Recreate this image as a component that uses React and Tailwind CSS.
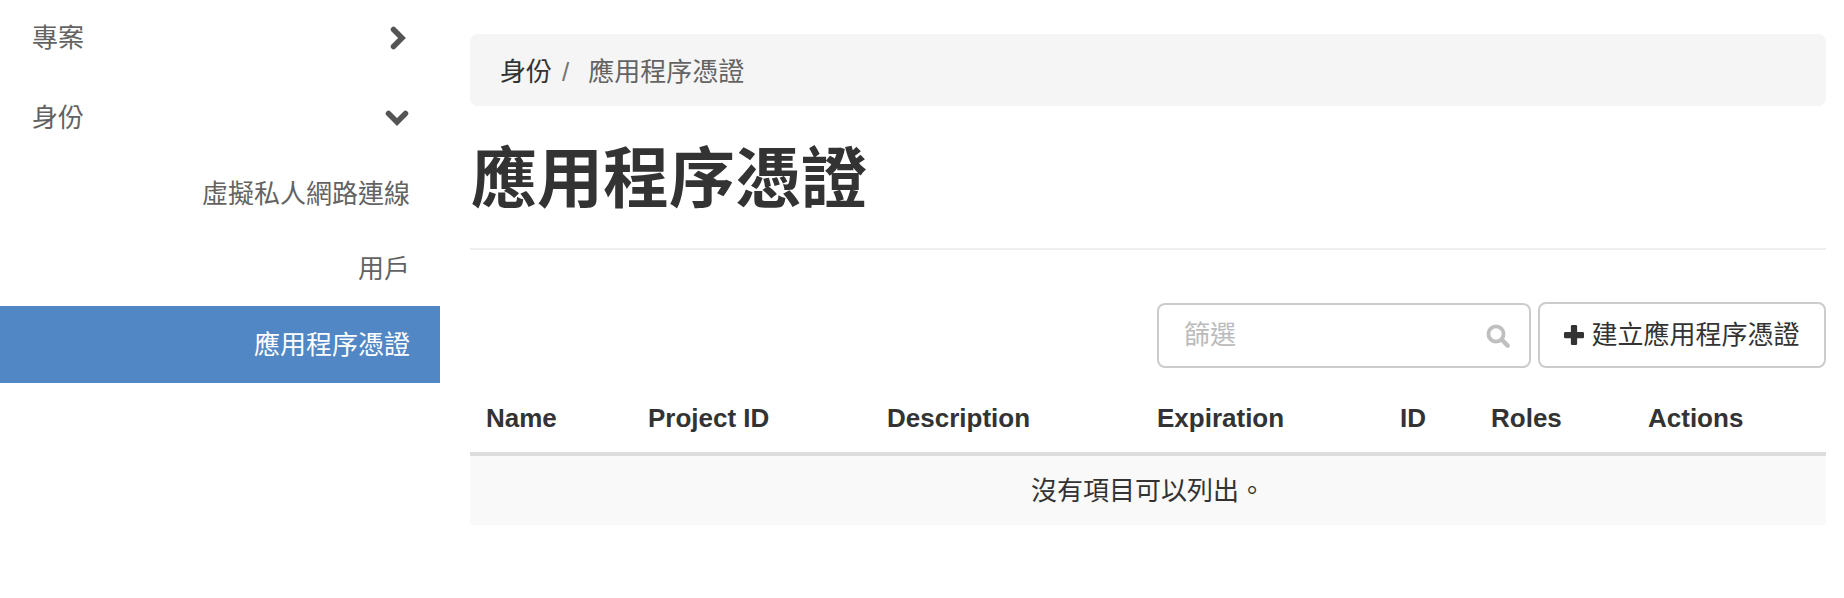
const columnas = [
  { nombre: 'Name', ancho: 'w-[162px]' },
  { nombre: 'Project ID', ancho: 'w-[239px]' },
  { nombre: 'Description', ancho: 'w-[270px]' },
  { nombre: 'Expiration', ancho: 'w-[243px]' },
  { nombre: 'ID', ancho: 'w-[91px]' },
  { nombre: 'Roles', ancho: 'w-[157px]' },
  { nombre: 'Actions', ancho: 'w-[194px]' },
]

function ChevronDerecha() {
  return (
    <svg width="16" height="24" viewBox="0 0 16 24" className="shrink-0">
      <path d="M3.5 3.5 L12 12 L3.5 20.5" fill="none" stroke="#555555" strokeWidth="5.5" strokeLinecap="round" />
    </svg>
  )
}

function ChevronAbajo() {
  return (
    <svg width="24" height="16" viewBox="0 0 24 16" className="shrink-0">
      <path d="M3.5 3.5 L12 12 L20.5 3.5" fill="none" stroke="#555555" strokeWidth="5.5" strokeLinecap="round" />
    </svg>
  )
}

function IconoBuscar() {
  return (
    <svg width="24" height="24" viewBox="0 0 24 24" className="shrink-0">
      <circle cx="10" cy="10" r="7.6" fill="none" stroke="#bfbfbf" strokeWidth="3.8" />
      <path d="M15.8 15.8 L21.6 21.6" stroke="#bfbfbf" strokeWidth="4.4" strokeLinecap="round" />
    </svg>
  )
}

function IconoMas() {
  return (
    <svg width="20" height="20" viewBox="0 0 16 16" className="shrink-0">
      <path d="M5.5 1 a1 1 0 0 1 1 -1 h3 a1 1 0 0 1 1 1 v4.5 h4.5 a1 1 0 0 1 1 1 v3 a1 1 0 0 1 -1 1 h-4.5 v4.5 a1 1 0 0 1 -1 1 h-3 a1 1 0 0 1 -1 -1 v-4.5 h-4.5 a1 1 0 0 1 -1 -1 v-3 a1 1 0 0 1 1 -1 h4.5 z" fill="#333333" />
    </svg>
  )
}

function Sidebar() {
  return (
    <aside className="w-[440px] shrink-0 text-[26px] leading-[36px] text-[#636363]">
      <div className="flex h-[76px] items-center justify-between pl-8 pr-[34px]">
        <span>專案</span>
        <ChevronDerecha />
      </div>
      <div className="flex h-[81px] items-center justify-between pl-8 pr-[31px] pt-[2px]">
        <span>身份</span>
        <ChevronAbajo />
      </div>
      <div className="flex h-[74px] items-center justify-end pr-[30px]">虛擬私人網路連線</div>
      <div className="flex h-[75px] items-center justify-end pr-[30px]">用戶</div>
      <div className="flex h-[77px] items-center justify-end bg-[#5087c4] pr-[30px] text-white">應用程序憑證</div>
    </aside>
  )
}

export default function App() {
  return (
    <div className="flex h-[598px] overflow-hidden bg-white font-['Liberation_Sans','Noto_Sans_CJK_TC',sans-serif] text-[#333333]">
      <Sidebar />
      <main className="flex-1 pl-[30px] pr-[18px] pt-[34px]">
        <div className="flex h-[72px] items-center rounded-lg bg-[#f5f5f5] px-[30px] pt-1 text-[26px]">
          <span className="text-[#333333]">身份</span>
          <span className="px-[10px] text-[#767676]">/</span>
          <span className="pl-[9px] text-[#636363]">應用程序憑證</span>
        </div>

        <div className="mt-[30px] h-[114px] border-b-2 border-[#eeeeee] pl-px pt-1">
          <h1 className="text-[66px] font-bold leading-[78px] text-[#333333]">應用程序憑證</h1>
        </div>

        <div className="mt-[52px] flex items-end justify-end gap-[7px]">
          <div className="flex h-[65px] w-[374px] items-center justify-between rounded-lg border-2 border-[#cccccc] pl-[25px] pr-[19px] text-[26px] text-[#bbbbbb]">
            <span>篩選</span>
            <IconoBuscar />
          </div>
          <button className="flex h-[66px] w-[288px] items-center justify-center gap-[7px] rounded-lg border-2 border-[#cccccc] bg-white text-[26px] text-[#333333]">
            <IconoMas />
            <span>建立應用程序憑證</span>
          </button>
        </div>

        <table className="mt-[17px] w-full table-fixed">
          <thead>
            <tr className="border-b-4 border-[#dddddd]">
              {columnas.map(col => (
                <th key={col.nombre} className={`${col.ancho} h-[69px] px-4 text-left text-[26px] font-bold`}>
                  {col.nombre}
                </th>
              ))}
            </tr>
          </thead>
          <tbody>
            <tr className="bg-[#f9f9f9]">
              <td colSpan={7} className="h-[71px] pt-[1px] text-center text-[26px]">沒有項目可以列出。</td>
            </tr>
          </tbody>
        </table>
      </main>
    </div>
  )
}
